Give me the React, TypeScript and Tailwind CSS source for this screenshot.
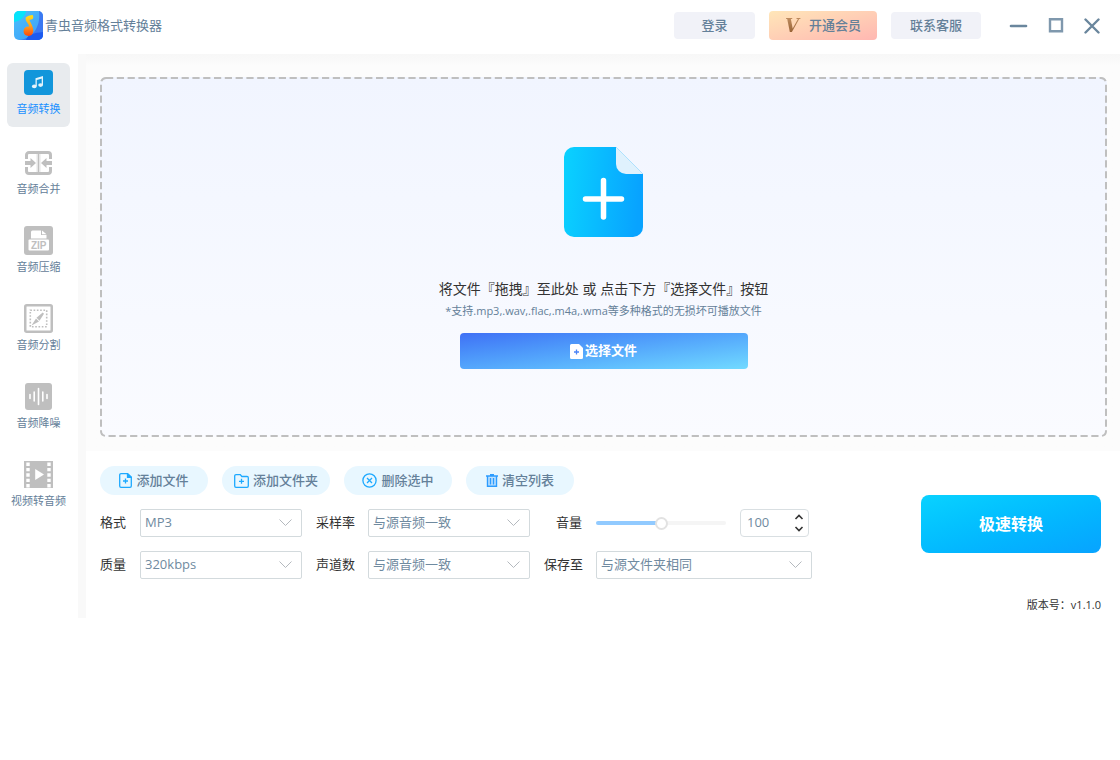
import React, { useState } from "react";

type Tab = "convert" | "merge" | "compress" | "split" | "denoise" | "video";

const ConvertIcon = () => (
  <svg width="29" height="25" viewBox="0 0 29 25">
    <rect width="29" height="25" rx="4" fill="#1296db" />
    <g fill="#e4f3fb">
      <path d="M11.5 8.2 19 6v2.2l-6.2 1.9v6h-1.3z" />
      <path d="M17.7 7.5H19v7.7h-1.3z" />
      <ellipse cx="10.3" cy="16.4" rx="2.4" ry="1.8" />
      <ellipse cx="16.6" cy="15.1" rx="2.4" ry="1.8" />
    </g>
  </svg>
);

const MergeIcon = () => (
  <svg width="27" height="24" viewBox="0 0 27 24">
    <path
      d="M1.5 8V4A2.5 2.5 0 0 1 4 1.5h19A2.5 2.5 0 0 1 25.5 4v4M1.5 16v4A2.5 2.5 0 0 0 4 22.5h19a2.5 2.5 0 0 0 2.5-2.5v-4"
      fill="none"
      stroke="#bfbfbf"
      strokeWidth="3"
    />
    <path d="M13.5 2v20" stroke="#bfbfbf" strokeWidth="4" />
    <path d="M12 3v18M15 3v18" stroke="#fff" strokeWidth="1.2" />
    <path d="M0 10h5.500V7l5.500 5-5.500 5v-3H0zM27 10h-5.500V7L16 12l5.500 5v-3H27z" fill="#bfbfbf" />
  </svg>
);

const ZipIcon = () => (
  <svg width="29" height="29" viewBox="0 0 29 29">
    <rect width="29" height="29" rx="3" fill="#bfbfbf" />
    <path d="M7 12.5V6a1.5 1.5 0 0 1 1.5-1.5H17V9h5.500v3.500z" fill="#fff" />
    <path d="M18 4.500 22.500 8.200H18z" fill="#fff" />
    <rect x="4.5" y="13.5" width="20.5" height="11" rx="1" fill="#fff" />
    <text
      x="14.7"
      y="22.7"
      textAnchor="middle"
      fontSize="10"
      fontWeight="700"
      fontFamily="Liberation Sans, sans-serif"
      fill="#bfbfbf"
    >
      ZIP
    </text>
  </svg>
);

const SplitIcon = () => (
  <svg width="29" height="29" viewBox="0 0 29 29">
    <rect x="1.25" y="1.25" width="26.5" height="26.5" rx="1.5" fill="none" stroke="#bfbfbf" strokeWidth="2.5" />
    <rect x="6.3" y="6.3" width="16.4" height="16.4" fill="none" stroke="#bfbfbf" strokeWidth="1.6" strokeDasharray="1.64 1.64" />
    <path d="m7.500 21.500 4.500-7 3 3zM12.500 13.800l6.200-5.300 1.300 1.300-4.500 7z" fill="#bfbfbf" />
  </svg>
);

const DenoiseIcon = () => (
  <svg width="27" height="27" viewBox="0 0 27 27">
    <rect width="27" height="27" rx="3" fill="#bfbfbf" />
    <path
      d="M5 11.5v4M9.2 9v9M13.5 5.5v16M17.8 9v9M22 11.5v4"
      stroke="#fff"
      strokeWidth="1.6"
      strokeLinecap="round"
    />
  </svg>
);

const VideoIcon = () => (
  <svg width="29" height="27" viewBox="0 0 29 27">
    <rect width="29" height="27" fill="#bfbfbf" />
    <path
      d="M4 1.5v25M25 1.5v25"
      stroke="#fff"
      strokeWidth="3.4"
      strokeDasharray="3.4 2"
    />
    <path d="M11.200 8v11l8.800-5.500z" fill="#fff" />
  </svg>
);

const tabs: { id: Tab; label: string; icon: React.ReactNode }[] = [
  { id: "convert", label: "音频转换", icon: <ConvertIcon /> },
  { id: "merge", label: "音频合并", icon: <MergeIcon /> },
  { id: "compress", label: "音频压缩", icon: <ZipIcon /> },
  { id: "split", label: "音频分割", icon: <SplitIcon /> },
  { id: "denoise", label: "音频降噪", icon: <DenoiseIcon /> },
  { id: "video", label: "视频转音频", icon: <VideoIcon /> },
];

const Logo = () => (
  <svg width="29" height="29" viewBox="0 0 29 29">
    <defs>
      <linearGradient id="logoBg" x1="0" y1="0" x2="1" y2="1">
        <stop offset="0" stopColor="#4cc0fb" />
        <stop offset="1" stopColor="#3c9cf8" />
      </linearGradient>
      <linearGradient id="logoNote" x1="0" y1="0" x2="0" y2="1">
        <stop offset="0" stopColor="#ffe11a" />
        <stop offset="0.5" stopColor="#ffa51f" />
        <stop offset="1" stopColor="#ff4a0c" />
      </linearGradient>
      <clipPath id="logoClip">
        <rect width="29" height="29" rx="5" />
      </clipPath>
    </defs>
    <g clipPath="url(#logoClip)">
      <rect width="29" height="29" fill="url(#logoBg)" />
      <path d="M0 0h12C11 6 6 10 0 11z" fill="#06e4fb" />
      <path d="M25 0h4v29H6c12-2 21-12 19-29z" fill="#3b79f2" />
      <path d="M12 29c2-6 8-7 17-8v8z" fill="#1c5bf0" />
      <path
        d="M18.500 4c-2.500.3-5 .9-6.800 2.400-.4 2 .4 3.600 1.600 5.400.9 1.300 1.600 2.500 2 3.900-3.300-.6-5.700 1.700-5.700 4.500s2.200 4.700 4.900 4.700c3.300 0 5-2.600 4.800-5.900-.1-3.500-2.500-6.300-3.900-9.900 1-.5 2.500-.4 3.500-1.300.6-1.300.5-2.900-.4-3.800z"
        fill="url(#logoNote)"
      />
    </g>
  </svg>
);

const FileIcon = () => (
  <svg width="13" height="15" viewBox="0 0 13 15" fill="none" stroke="#1da9ff" strokeWidth="1.3">
    <path d="M8.500.7H2A1.300 1.300 0 0 0 .7 2v11A1.300 1.300 0 0 0 2 14.300h9a1.300 1.300 0 0 0 1.300-1.300V4.300z" />
    <path d="M8.500.7v3.600h3.800z" fill="#1da9ff" />
    <path d="M6.500 5.500v5M4 8h5" />
  </svg>
);

const FolderIcon = () => (
  <svg width="15" height="14" viewBox="0 0 15 14" fill="none" stroke="#1da9ff" strokeWidth="1.3">
    <path d="M.7 2A1.300 1.300 0 0 1 2 .7h4.300l1.500 1.800H13a1.300 1.300 0 0 1 1.300 1.300V12a1.300 1.300 0 0 1-1.300 1.300H2A1.300 1.300 0 0 1 .7 12z" />
    <path d="M7.500 4.800v5M5 7.300h5" />
  </svg>
);

const RemoveIcon = () => (
  <svg width="15" height="15" viewBox="0 0 15 15" fill="none" stroke="#1da9ff" strokeWidth="1.3">
    <circle cx="7.5" cy="7.5" r="6.6" />
    <path d="m5 5 5 5M10 5l-5 5" />
  </svg>
);

const TrashIcon = () => (
  <svg width="12" height="13" viewBox="0 0 12 13" fill="#bfe2ff" stroke="#2c9cff" strokeWidth="1.4">
    <path d="M1.500 2v10.300h9V2M0 2h12M4 .7h4M4.500 4v6.500M7.500 4v6.500" />
  </svg>
);

const actions = [
  { label: "添加文件", icon: <FileIcon /> },
  { label: "添加文件夹", icon: <FolderIcon /> },
  { label: "删除选中", icon: <RemoveIcon /> },
  { label: "清空列表", icon: <TrashIcon /> },
];

interface SelectProps {
  id: string;
  label: string;
  options: string[];
}

const SelectField = ({ id, label, options }: SelectProps) => (
  <>
    <label htmlFor={id} className="whitespace-nowrap text-right text-[#333333]">
      {label}
    </label>
    <div className="relative">
      <select
        id={id}
        className="block h-7 w-full appearance-none rounded-xs border border-[#d3dadd] bg-white pl-1 pr-8 text-[13px] text-[#6f8aa0] outline-none"
      >
        {options.map((option) => (
          <option key={option}>{option}</option>
        ))}
      </select>
      <svg
        className="pointer-events-none absolute right-2.5 top-2.5"
        width="13"
        height="8"
        viewBox="0 0 13 8"
        fill="none"
        stroke="#b4b9be"
      >
        <path d="m.5.5 6 6 6-6" />
      </svg>
    </div>
  </>
);

const App = () => {
  const [activeTab, setActiveTab] = useState<Tab>("convert");
  const [volume, setVolume] = useState(100);

  const changeVolume = (value: number) => {
    setVolume(Math.min(200, Math.max(0, value)));
  };

  return (
    <div className="bg-white font-['Open_Sans','Noto_Sans_CJK_SC',sans-serif] text-[13px] text-[#648099]">
      {/* Title bar */}
      <header className="flex h-[54px] items-center pb-[3px] pl-3.5 pr-5">
        <Logo />
        <h1 className="ml-0.5">青虫音频格式转换器</h1>
        <div className="ml-auto flex items-center gap-3.5 font-medium">
          <button className="h-[27px] w-[81px] rounded-sm bg-[#f1f2f8]">登录</button>
          <button className="flex h-[29px] w-[108px] items-center justify-center gap-1.5 rounded-sm bg-linear-to-br from-[#ffe6b8] to-[#ffb7b2]">
            <span className="bg-linear-to-b from-[#c8976a] to-[#8a5426] bg-clip-text pr-1 font-['DejaVu_Serif',serif] text-lg font-bold italic leading-6 text-transparent">
              V
            </span>
            开通会员
          </button>
          <button className="h-[27px] w-[90px] rounded-sm bg-[#f1f2f8]">联系客服</button>
        </div>
        <div className="ml-7 flex items-center gap-5">
          <button aria-label="最小化">
            <svg width="19" height="16" viewBox="0 0 19 16">
              <path d="M2 8h15" stroke="#6a869d" strokeWidth="2.6" strokeLinecap="round" />
            </svg>
          </button>
          <button aria-label="最大化">
            <svg width="16" height="16" viewBox="0 0 16 16">
              <path d="M2 1.200h12v12H2z" fill="none" stroke="#7f98ad" strokeWidth="2.4" />
            </svg>
          </button>
          <button aria-label="关闭">
            <svg width="16" height="16" viewBox="0 0 16 16">
              <path d="m1.500 1.500 13 13M14.500 1.500l-13 13" stroke="#6a869d" strokeWidth="2.4" strokeLinecap="round" />
            </svg>
          </button>
        </div>
      </header>

      <div className="flex">
        {/* Sidebar */}
        <nav className="flex w-[78px] shrink-0 flex-col gap-3.5 pl-[7px] pt-[9px]">
          {tabs.map((tab) => (
            <button
              key={tab.id}
              onClick={() => setActiveTab(tab.id)}
              className={`flex h-16 w-[63px] flex-col items-center gap-1 rounded-md pt-[5px] text-[11px] leading-4 first:mb-0.5 ${
                activeTab === tab.id ? "bg-[#e8ebee] text-[#1890ff]" : ""
              }`}
            >
              <span className="flex h-[29px] items-center">{tab.icon}</span>
              <span className="whitespace-nowrap">{tab.label}</span>
            </button>
          ))}
        </nav>

        <main className="min-w-0 flex-1 border-l-8 border-[#f9f9f9]">
          {/* Drop area */}
          <section className="bg-linear-to-b from-[#f7f7f7] to-[#fcfcfc] to-[12px] pb-3.5 pl-3.5 pr-[13px] pt-[23px]">
            <div className="relative flex h-[360px] flex-col items-center rounded-md bg-linear-to-b from-[#f1f5ff] to-[#fafbff] pt-[70px]">
              <svg className="pointer-events-none absolute inset-0 size-full">
                <rect
                  x="1"
                  y="1"
                  rx="5"
                  className="h-[calc(100%-2px)] w-[calc(100%-2px)]"
                  fill="none"
                  stroke="#bfbfbf"
                  strokeWidth="2"
                  strokeDasharray="7.2 3.6"
                />
              </svg>
              <svg width="79" height="90" viewBox="0 0 79 90">
                <defs>
                  <linearGradient id="fileBg" x1="0" y1="0" x2="1" y2="0.1">
                    <stop offset="0" stopColor="#0ad2ff" />
                    <stop offset="1" stopColor="#08a3ff" />
                  </linearGradient>
                </defs>
                <path d="M10 0h42l27 27v53a10 10 0 0 1-10 10H10A10 10 0 0 1 0 80V10A10 10 0 0 1 10 0z" fill="url(#fileBg)" />
                <path d="M52 0l27 27H62a10 10 0 0 1-10-10z" fill="#dff1fd" />
                <path d="M39.500 33.500v36.500M21.500 52h36" stroke="#fff" strokeWidth="5.5" strokeLinecap="round" />
              </svg>
              <p className="mt-10 text-sm leading-6 text-[#333333]">
                将文件『拖拽』至此处 或 点击下方『选择文件』按钮
              </p>
              <p className="text-[11px] leading-5">
                *支持.mp3,.wav,.flac,.m4a,.wma等多种格式的无损坏可播放文件
              </p>
              <button className="mt-3 flex h-9 w-72 items-center justify-center gap-0.5 rounded-sm bg-linear-to-br from-[#4070f5] to-[#72daff] font-bold text-white">
                <svg width="13" height="15" viewBox="0 0 13 15">
                  <path d="M1.500 0H9l4 4v9.500a1.500 1.500 0 0 1-1.500 1.500h-10A1.500 1.500 0 0 1 0 13.500v-12A1.500 1.500 0 0 1 1.500 0z" fill="#fff" />
                  <path d="M6.500 5.500v5M4 8h5" stroke="#4a83f7" strokeWidth="1.3" />
                </svg>
                选择文件
              </button>
            </div>
          </section>

          {/* Output settings */}
          <section className="flex flex-wrap justify-between pl-3.5 pr-[19px] pt-[15px]">
            <div>
              <div className="flex gap-3.5 font-medium">
                {actions.map((action) => (
                  <button
                    key={action.label}
                    className="flex h-[29px] w-[108px] items-center justify-center gap-1 rounded-full bg-[#e8f7ff]"
                  >
                    {action.icon}
                    {action.label}
                  </button>
                ))}
              </div>
              <div className="mt-3.5 grid grid-cols-[26px_162px_38px_162px_38px_216px] items-center gap-3.5">
                <SelectField id="format" label="格式" options={["MP3", "WAV", "FLAC", "M4A", "WMA"]} />
                <SelectField id="rate" label="采样率" options={["与源音频一致", "44100Hz", "48000Hz"]} />
                <label htmlFor="volume" className="text-right text-[#333333]">
                  音量
                </label>
                <div className="flex items-center gap-3.5">
                  <input
                    id="volume"
                    type="range"
                    min={0}
                    max={200}
                    value={volume}
                    onChange={(e) => changeVolume(Number(e.target.value))}
                    className="h-1 w-[130px] appearance-none rounded-full bg-[#f5f5f5] [&::-webkit-slider-thumb]:size-[13px] [&::-webkit-slider-thumb]:appearance-none [&::-webkit-slider-thumb]:rounded-full [&::-webkit-slider-thumb]:border-2 [&::-webkit-slider-thumb]:border-[#e2e2e2] [&::-webkit-slider-thumb]:bg-white"
                    style={{
                      backgroundImage: `linear-gradient(to right, #91caff ${volume / 2}%, transparent ${volume / 2}%)`,
                    }}
                  />
                  <div className="flex h-7 w-[69px] items-center rounded-sm border border-[#d9dfe2] pl-1.5 pr-1">
                    <input
                      type="number"
                      aria-label="音量数值"
                      value={volume}
                      onChange={(e) => changeVolume(Number(e.target.value))}
                      className="min-w-0 flex-1 appearance-none text-[#6f8aa0] outline-none [&::-webkit-inner-spin-button]:appearance-none"
                    />
                    <div className="flex flex-col gap-1">
                      <button aria-label="增加" onClick={() => changeVolume(volume + 1)}>
                        <svg className="block" width="10" height="8" viewBox="0 0 10 8">
                          <path d="m1.500 6 3.500-3.500L8.500 6" fill="none" stroke="#333" strokeWidth="1.6" />
                        </svg>
                      </button>
                      <button aria-label="减少" onClick={() => changeVolume(volume - 1)}>
                        <svg className="block" width="10" height="8" viewBox="0 0 10 8">
                          <path d="M1.500 2 5 5.500 8.500 2" fill="none" stroke="#333" strokeWidth="1.6" />
                        </svg>
                      </button>
                    </div>
                  </div>
                </div>
                <SelectField id="quality" label="质量" options={["320kbps", "256kbps", "192kbps", "128kbps"]} />
                <SelectField id="channel" label="声道数" options={["与源音频一致", "单声道", "立体声"]} />
                <SelectField id="target" label="保存至" options={["与源文件夹相同", "自定义"]} />
              </div>
            </div>
            <button className="mt-[29px] h-[58px] w-[180px] rounded-lg bg-linear-to-br from-[#0ad2ff] to-[#08a3ff] text-base font-bold text-white">
              极速转换
            </button>
            <p className="mt-4 w-full pb-[3px] text-right text-[11px] leading-5 text-[#333333]">版本号：v1.1.0</p>
          </section>
        </main>
      </div>
    </div>
  );
};

export default App;
